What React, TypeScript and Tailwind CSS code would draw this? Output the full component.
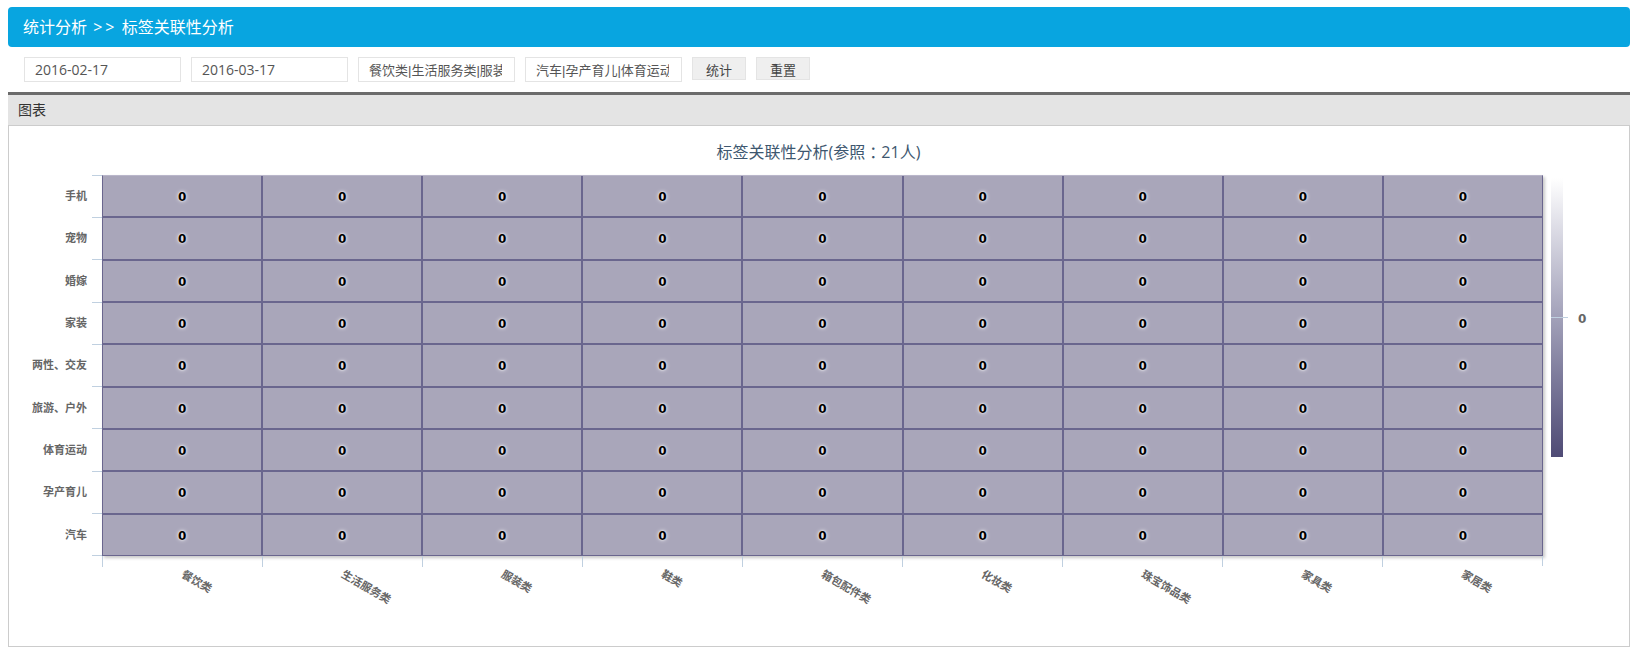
const xLabels = ['餐饮类', '生活服务类', '服装类', '鞋类', '箱包配件类', '化妆类', '珠宝饰品类', '家具类', '家居类']
const yLabels = ['手机', '宠物', '婚嫁', '家装', '两性、交友', '旅游、户外', '体育运动', '孕产育儿', '汽车']
const dates = ['2016-02-17', '2016-03-17']
const tags = ['餐饮类|生活服务类|服装类|鞋类|箱包配件类', '汽车|孕产育儿|体育运动|旅游、户外']

export default function App() {
  return (
    <div className="w-[1640px] h-[660px] overflow-hidden bg-white px-2 pt-[7px] font-['Open_Sans','Noto_Sans_CJK_SC',sans-serif] text-[#555]">
      <div className="h-10 w-[1622px] rounded-[4px] bg-[#08a5e0] pl-[15px] text-[16px] leading-10 text-white">
        统计分析 <span className="ml-[2px] tracking-[3px]">&gt;&gt;</span> 标签关联性分析
      </div>

      <div className="flex gap-[10px] pl-4 pt-[10px]">
        {dates.map((value) => (
          <input
            key={value}
            readOnly
            value={value}
            className="h-[25px] w-[157px] border border-[#e4e4e4] px-[10px] text-[14px] text-[#555] outline-none"
          />
        ))}
        {tags.map((value) => (
          <input
            key={value}
            readOnly
            value={value}
            className="h-[25px] w-[157px] border border-[#e4e4e4] pl-[10px] pr-3 font-['Liberation_Sans','Noto_Sans_CJK_SC',sans-serif] text-[13px] text-[#555] outline-none"
          />
        ))}
        <button className="h-[23px] w-[54px] border border-[#e4e4e4] bg-[#efefef] pt-[3px] text-[13px] leading-[14px] text-[#444]">统计</button>
        <button className="h-[23px] w-[54px] border border-[#e4e4e4] bg-[#efefef] pt-[3px] text-[13px] leading-[14px] text-[#444]">重置</button>
      </div>

      <div className="mt-[10px] h-[33px] w-[1622px] border-t-[3px] border-[#6b6b6b] bg-[#e4e4e4] pl-[10px] text-[14px] leading-[30px] text-[#333]">
        图表
      </div>

      <div className="h-[522px] w-[1622px] border border-[#ccc]">
        <div className="flex h-[49px] items-center justify-center pt-[2px] pr-[1px] text-[16px] text-[#3e576f]">
          标签关联性分析(参照<span className="font-['Noto_Sans_CJK_TC',sans-serif]">：</span>21人)
        </div>

        <div className="flex">
          <div className="grid h-[381px] w-[83px] grid-rows-9 gap-[2px] py-px">
            {yLabels.map((label) => (
              <div key={label} className="flex items-center justify-end pr-[5px] text-[11px] font-bold text-[#666]">
                {label}
              </div>
            ))}
          </div>

          <div className="grid h-[381px] w-[10px] grid-rows-9 border-b border-[#c0d0e0]">
            {yLabels.map((label) => (
              <div key={label} className="border-t border-[#c0d0e0]" />
            ))}
          </div>

          <div className="w-[1441px]">
            <div className="grid h-[381px] grid-cols-9 grid-rows-9 gap-[2px] border border-[#6a668e] border-t-[#b9b6ca] bg-[#6a668e] shadow-[2px_2px_3px_rgba(0,0,0,0.22)]">
              {yLabels.map((row) =>
                xLabels.map((col) => (
                  <div
                    key={row + col}
                    className="flex items-center justify-center bg-[#a9a6ba] pt-[2px] font-['DejaVu_Sans',sans-serif] text-[12px] font-bold text-black [text-shadow:0_0_4px_#fff,0_0_2px_#fff]"
                  >
                    0
                  </div>
                ))
              )}
            </div>
            <div className="grid h-[10px] grid-cols-9 border-r border-[#c0d0e0]">
              {xLabels.map((label) => (
                <div key={label} className="h-[10px] border-l border-[#c0d0e0] pl-[50%] pt-[11px]">
                  <span className="ml-[3px] block w-max origin-top-left rotate-[30deg] whitespace-nowrap text-[11px] leading-[14px] font-bold text-[#666]">
                    {label}
                  </span>
                </div>
              ))}
            </div>
          </div>

          <div className="relative ml-[8px] mt-[3px] h-[279px] w-3 bg-gradient-to-b from-white to-[#4f4b75]">
            <div className="absolute left-0 top-[139px] h-px w-[17px] bg-[#c0d0e0]" />
            <span className="absolute left-[27px] top-[133px] font-['DejaVu_Sans',sans-serif] text-[12px] leading-4 font-bold text-[#666]">
              0
            </span>
          </div>
        </div>
      </div>
    </div>
  )
}
